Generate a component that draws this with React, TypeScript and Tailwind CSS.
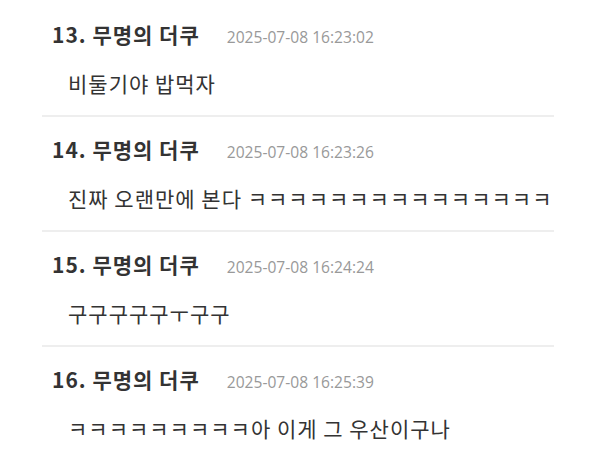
import React from 'react';

const comments = [
  { no: 13, name: '무명의 더쿠', date: '2025-07-08 16:23:02', text: '비둘기야 밥먹자' },
  { no: 14, name: '무명의 더쿠', date: '2025-07-08 16:23:26', text: '진짜 오랜만에 본다 ㅋㅋㅋㅋㅋㅋㅋㅋㅋㅋㅋㅋㅋㅋㅋ' },
  { no: 15, name: '무명의 더쿠', date: '2025-07-08 16:24:24', text: '구구구구구ㅜ구구' },
  { no: 16, name: '무명의 더쿠', date: '2025-07-08 16:25:39', text: 'ㅋㅋㅋㅋㅋㅋㅋㅋㅋ아 이게 그 우산이구나' },
];

const App = () => {
  return (
    <div className="w-[600px] h-[476px] bg-white overflow-hidden font-['Noto_Sans_CJK_KR',sans-serif]">
      <ul className="mt-[2px] ml-[42px] w-[512px]">
        {comments.map((c, i) => (
          <li
            key={c.no}
            className={`h-[115px] ${i < comments.length - 1 ? 'border-b-2 border-[#eeeeee]' : ''}`}
          >
            <div className="flex items-baseline pl-[10px] pt-[18px] leading-[28px] whitespace-nowrap">
              <span className="text-[21px] font-bold tracking-[1px] text-[#333333]">
                {c.no}. {c.name}
              </span>
              <span className="ml-[27px] font-['Open_Sans',sans-serif] text-[15.6px] text-[#999999]">
                {c.date}
              </span>
            </div>
            <div className="mt-[18px] pl-[26px] text-[21px] tracking-[1px] leading-[28px] text-[#333333] whitespace-nowrap">
              {c.text}
            </div>
          </li>
        ))}
      </ul>
    </div>
  );
};

export default App;
